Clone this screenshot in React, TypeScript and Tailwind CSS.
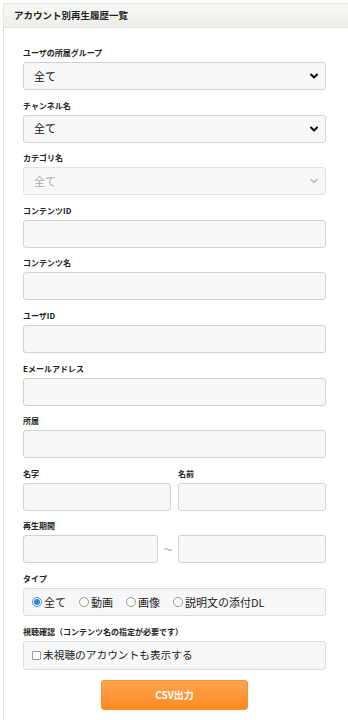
import React from "react";

const font = { fontFamily: '"Noto Sans CJK JP", "Noto Sans", sans-serif' };

function Chevron({ disabled }: { disabled?: boolean }) {
  return (
    <svg width="10" height="7" viewBox="0 0 10 7" className="absolute right-[6px] top-1/2 -translate-y-1/2">
      <path d="M2 2 L5 5 L8 2" fill="none" stroke={disabled ? "#b5b5b5" : "#111"} strokeWidth={disabled ? 1.2 : 2} strokeLinecap="round" strokeLinejoin="round" />
    </svg>
  );
}

function Label({ children }: { children: React.ReactNode }) {
  return <div className="h-[14px] leading-[14px] mb-[2px] text-[8px] font-bold text-[#222] whitespace-nowrap">{children}</div>;
}

function Select({ disabled }: { disabled?: boolean }) {
  return (
    <div className={`relative h-[28px] rounded-[3px] border ${disabled ? "border-[#e2e2e2] bg-[#f7f7f7] text-[#aaa]" : "border-[#d2d2d2] bg-[#f7f7f7] text-[#111]"} flex items-center pl-[10px] text-[11px]`}>
      全て
      <Chevron disabled={disabled} />
    </div>
  );
}

function Input({ className = "" }: { className?: string }) {
  return <div className={`h-[28px] rounded-[3px] border border-[#d2d2d2] bg-[#f7f7f7] ${className}`} />;
}

function Field({ label, children }: { label: string; children: React.ReactNode }) {
  return (
    <div className="mb-[8.6px]">
      <Label>{label}</Label>
      {children}
    </div>
  );
}

function Radio({ checked, label }: { checked?: boolean; label: string }) {
  return (
    <div className="flex items-center mr-[13px]">
      <span className={`w-[10px] h-[10px] rounded-full border ${checked ? "border-[#4a90d9]" : "border-[#9a9a9a]"} bg-white flex items-center justify-center mr-[2px]`}>
        {checked && <span className="w-[6px] h-[6px] rounded-full bg-[#2f86e0]" />}
      </span>
      <span className="text-[11px] text-[#222]">{label}</span>
    </div>
  );
}

export default function App() {
  return (
    <div className="w-full min-h-[720px] bg-white" style={font}>
      <div className="ml-[3px] mt-[3px] border-l border-t border-[#e2e2e2] min-h-[717px]">
        <div className="h-[24px] border-b border-[#e0e0e0] bg-gradient-to-b from-[#f8f8f6] to-[#eeeeea] flex items-center pl-[10px]">
          <span className="text-[9.5px] font-bold text-[#222]">アカウント別再生履歴一覧</span>
        </div>
        <div className="pl-[19px] pr-[22px] pt-[18px]">
          <Field label="ユーザの所属グループ"><Select /></Field>
          <Field label="チャンネル名"><Select /></Field>
          <Field label="カテゴリ名"><Select disabled /></Field>
          <Field label="コンテンツID"><Input /></Field>
          <Field label="コンテンツ名"><Input /></Field>
          <Field label="ユーザID"><Input /></Field>
          <Field label="Eメールアドレス"><Input /></Field>
          <Field label="所属"><Input /></Field>
          <div className="flex gap-[7px] mb-[8.6px]">
            <div className="flex-1">
              <Label>名字</Label>
              <Input />
            </div>
            <div className="flex-1">
              <Label>名前</Label>
              <Input />
            </div>
          </div>
          <Field label="再生期間">
            <div className="flex items-center">
              <Input className="w-[135px]" />
              <span className="w-[20px] text-center text-[9px] text-[#999]">～</span>
              <Input className="flex-1" />
            </div>
          </Field>
          <Field label="タイプ">
            <div className="h-[28px] rounded-[3px] border border-[#dedede] bg-[#f7f7f7] flex items-center pl-[8px]">
              <Radio checked label="全て" />
              <Radio label="動画" />
              <Radio label="画像" />
              <Radio label="説明文の添付DL" />
            </div>
          </Field>
          <Field label="視聴確認（コンテンツ名の指定が必要です）">
            <div className="h-[29px] rounded-[3px] border border-[#dedede] bg-[#f7f7f7] flex items-center pl-[8px]">
              <span className="w-[9px] h-[9px] border border-[#9a9a9a] bg-white rounded-[1px] mr-[2px]" />
              <span className="text-[10.7px] text-[#222]">未視聴のアカウントも表示する</span>
            </div>
          </Field>
          <div className="flex justify-center mt-[10px]">
            <div className="w-[147px] h-[30px] rounded-[3px] border border-[#f5922e] bg-gradient-to-b from-[#ffa34c] to-[#ff8a1f] flex items-center justify-center">
              <span className="text-[10px] font-bold text-white">CSV出力</span>
            </div>
          </div>
        </div>
      </div>
    </div>
  );
}
